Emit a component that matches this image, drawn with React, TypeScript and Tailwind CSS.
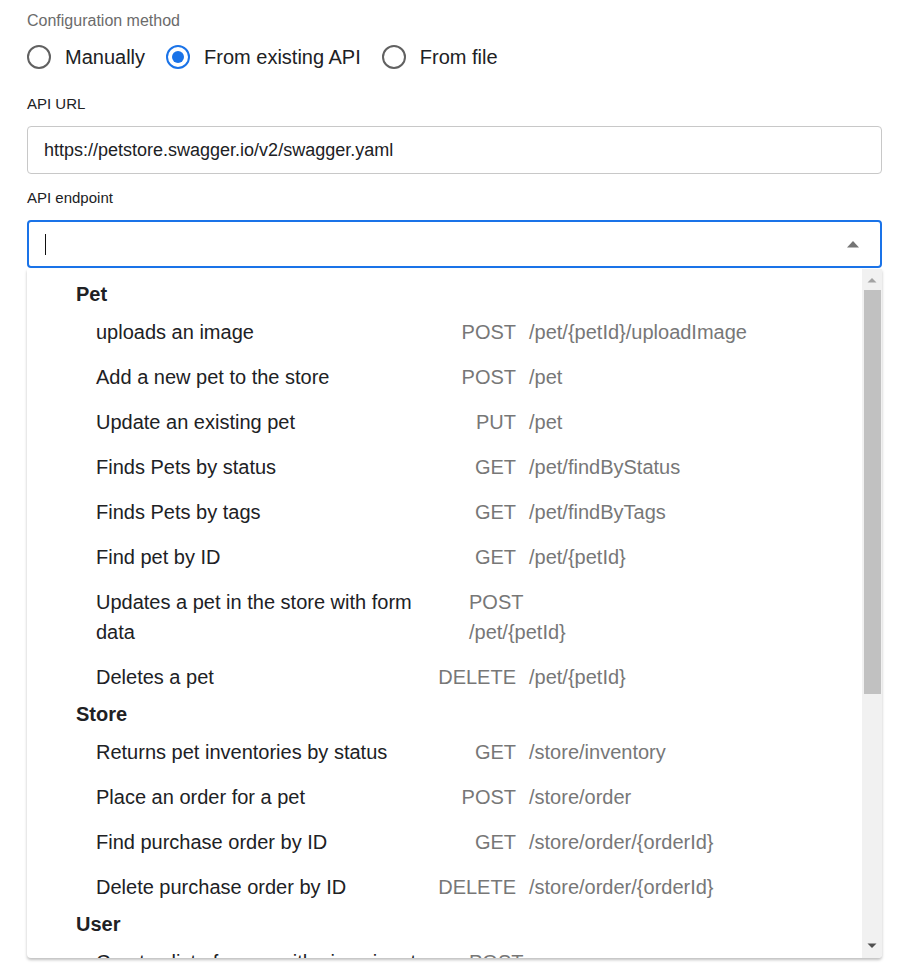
import React from "react";

type Endpoint = {
  label: string;
  method: string;
  path: string;
  stacked?: boolean;
};

type Group = { name: string; items: Endpoint[] };

const groups: Group[] = [
  {
    name: "Pet",
    items: [
      { label: "uploads an image", method: "POST", path: "/pet/{petId}/uploadImage" },
      { label: "Add a new pet to the store", method: "POST", path: "/pet" },
      { label: "Update an existing pet", method: "PUT", path: "/pet" },
      { label: "Finds Pets by status", method: "GET", path: "/pet/findByStatus" },
      { label: "Finds Pets by tags", method: "GET", path: "/pet/findByTags" },
      { label: "Find pet by ID", method: "GET", path: "/pet/{petId}" },
      { label: "Updates a pet in the store with form data", method: "POST", path: "/pet/{petId}", stacked: true },
      { label: "Deletes a pet", method: "DELETE", path: "/pet/{petId}" },
    ],
  },
  {
    name: "Store",
    items: [
      { label: "Returns pet inventories by status", method: "GET", path: "/store/inventory" },
      { label: "Place an order for a pet", method: "POST", path: "/store/order" },
      { label: "Find purchase order by ID", method: "GET", path: "/store/order/{orderId}" },
      { label: "Delete purchase order by ID", method: "DELETE", path: "/store/order/{orderId}" },
    ],
  },
  {
    name: "User",
    items: [
      { label: "Creates list of users with given input array", method: "POST", path: "/user/createWithArray", stacked: true },
    ],
  },
];

const font = { fontFamily: '"Liberation Sans", Arial, sans-serif' };

function Radio({ label, checked }: { label: string; checked?: boolean }) {
  return (
    <label className="flex items-center gap-[14px]">
      <span
        className={`flex h-[24px] w-[24px] items-center justify-center rounded-full border-2 ${
          checked ? "border-[#1a73e8]" : "border-[#616161]"
        }`}
      >
        {checked && <span className="h-[12px] w-[12px] rounded-full bg-[#1a73e8]" />}
      </span>
      <span className="text-[20px] leading-[40px] text-[#202124]">{label}</span>
    </label>
  );
}

function EndpointRow({ item }: { item: Endpoint }) {
  return (
    <div className="flex items-start py-[7.5px] pl-[69px] text-[20px] leading-[30px]">
      <div className="w-[334px] shrink-0 text-[#202124]">{item.label}</div>
      {item.stacked ? (
        <div className="ml-[39px] text-[#777]">
          <div>{item.method}</div>
          <div>{item.path}</div>
        </div>
      ) : (
        <div className="flex text-[#777]">
          <span className="w-[86px] text-right">{item.method}</span>
          <span className="ml-[13px]">{item.path}</span>
        </div>
      )}
    </div>
  );
}

export default function App() {
  return (
    <div className="min-h-[978px] w-[918px] bg-white" style={font}>
      <div className="ml-[27px] w-[855px] pt-[9px]">
        {/* Configuration method */}
        <div className="text-[16px] leading-[24px] text-[#6b6b6b]">Configuration method</div>
        <div className="mt-[4px] flex items-center gap-[21px]">
          <Radio label="Manually" />
          <Radio label="From existing API" checked />
          <Radio label="From file" />
        </div>

        {/* API URL */}
        <div className="mt-[17px] text-[15px] leading-[20px] text-[#202124]">API URL</div>
        <div className="mt-[12px] flex h-[48px] items-center rounded-[4px] border border-[#c8c8c8] pl-[16px] text-[18px] text-[#202124]">
          https://petstore.swagger.io/v2/swagger.yaml
        </div>

        {/* API endpoint */}
        <div className="mt-[14px] text-[15px] leading-[20px] text-[#202124]">API endpoint</div>
        <div className="mt-[12px] flex h-[48px] items-center justify-between rounded-[4px] border-2 border-[#1a73e8] pl-[16px] pr-[20px]">
          <span className="h-[21px] w-[1px] bg-[#111]" />
          <svg width="14" height="8" viewBox="0 0 14 8">
            <path d="M1 7.5 L7 1 L13 7.5 Z" fill="#757575" />
          </svg>
        </div>

        {/* endpoint menu */}
        <div className="mt-[1px] flex h-[689px] overflow-hidden rounded-b-[4px] bg-white shadow-[0_2px_3px_rgba(0,0,0,0.25)]">
          <div className="flex-1 overflow-hidden pt-[10px]">
            {groups.map((g) => (
              <div key={g.name}>
                <div className="pl-[49px] text-[20px] font-bold leading-[30px] text-[#202124]">{g.name}</div>
                {g.items.map((item, i) => (
                  <EndpointRow key={i} item={item} />
                ))}
              </div>
            ))}
          </div>
          <div className="flex w-[20px] flex-col items-center bg-[#f1f1f1]">
            <svg className="mt-[8px]" width="10" height="6" viewBox="0 0 10 6">
              <path d="M0.5 5.5 L5 1 L9.5 5.5 Z" fill="#a3a3a3" />
            </svg>
            <div className="mt-[7px] h-[404px] w-[17px] bg-[#c1c1c1]" />
            <div className="flex-1" />
            <svg className="mb-[9px]" width="10" height="6" viewBox="0 0 10 6">
              <path d="M0.5 0.5 L5 5 L9.5 0.5 Z" fill="#505050" />
            </svg>
          </div>
        </div>
      </div>
    </div>
  );
}
